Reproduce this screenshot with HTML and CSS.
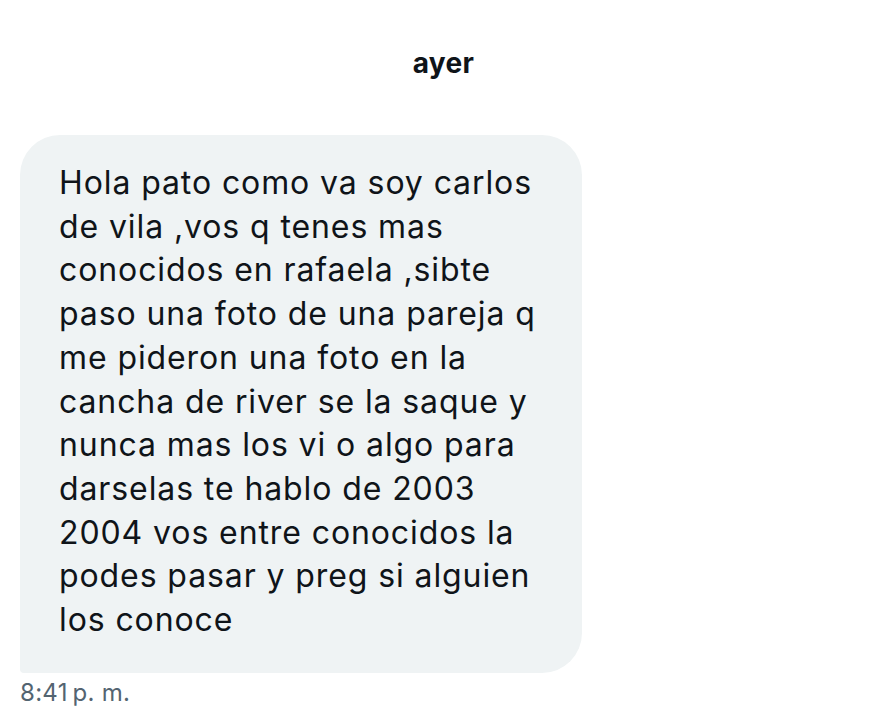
FILE: index.html
```html
<!DOCTYPE html>
<html>
<head>
  <meta charset="UTF-8">
  <title>Mensaje</title>
  <link rel="stylesheet" href="styles.css">
</head>
<body>
  <div class="day">ayer</div>

  <div class="message">
    <div class="bubble">
      Hola pato como va soy carlos<br>
      de vila ,vos q tenes mas<br>
      conocidos en rafaela ,sibte<br>
      paso una foto de una pareja q<br>
      me pideron una foto en la<br>
      cancha de river se la saque y<br>
      nunca mas los vi o algo para<br>
      darselas te hablo de 2003<br>
      2004 vos entre conocidos la<br>
      podes pasar y preg si alguien<br>
      los conoce
    </div>
    <div class="time">8:41&#8239;p. m.</div>
  </div>
</body>
</html>
```

FILE: styles.css
```css
body {
  margin: 0;
  background: #ffffff;
  font-family: Inter, "Noto Sans", sans-serif;
  color: #0f1419;
}
.day {
  text-align: center;
  font-weight: 700;
  font-size: 28px;
  line-height: 32px;
  padding-top: 47px;
  letter-spacing: 0.3px;
}
.message {
  padding: 56px 0 0 20px;
}
.bubble {
  width: 562px;
  box-sizing: border-box;
  background: #eff3f4;
  border-radius: 40px 40px 40px 4px;
  padding: 26px 10px 31px 39px;
  font-size: 32px;
  line-height: 43.7px;
  letter-spacing: 0.9px;
}
.time {
  margin-top: 5px;
  font-size: 24px;
  line-height: 30px;
  color: #536471;
  letter-spacing: 0.3px;
}
```
